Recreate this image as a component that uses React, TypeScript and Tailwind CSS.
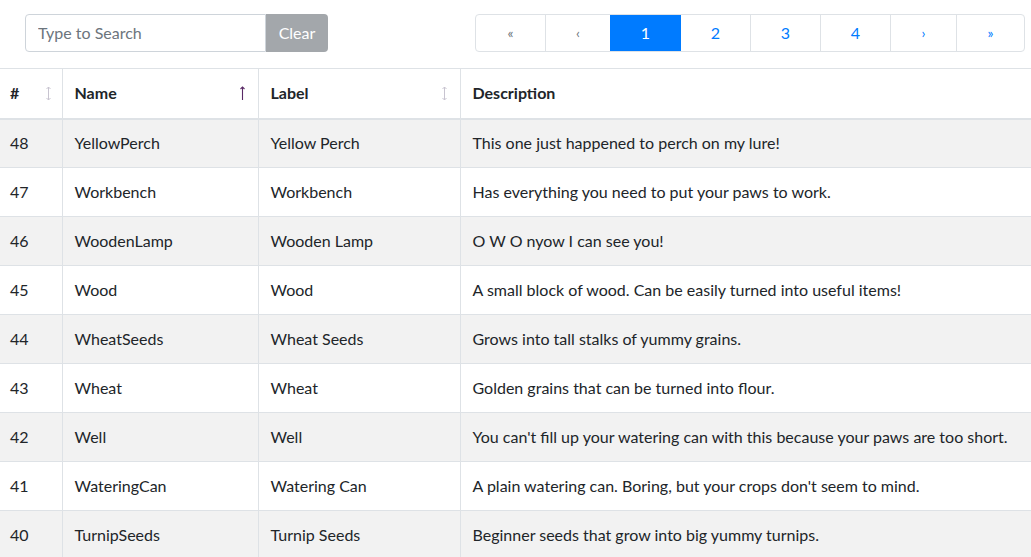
import { useState } from "react"

const items = [
  { id: 48, name: "YellowPerch", label: "Yellow Perch", description: "This one just happened to perch on my lure!" },
  { id: 47, name: "Workbench", label: "Workbench", description: "Has everything you need to put your paws to work." },
  { id: 46, name: "WoodenLamp", label: "Wooden Lamp", description: "O W O nyow I can see you!" },
  { id: 45, name: "Wood", label: "Wood", description: "A small block of wood. Can be easily turned into useful items!" },
  { id: 44, name: "WheatSeeds", label: "Wheat Seeds", description: "Grows into tall stalks of yummy grains." },
  { id: 43, name: "Wheat", label: "Wheat", description: "Golden grains that can be turned into flour." },
  { id: 42, name: "Well", label: "Well", description: "You can't fill up your watering can with this because your paws are too short." },
  { id: 41, name: "WateringCan", label: "Watering Can", description: "A plain watering can. Boring, but your crops don't seem to mind." },
  { id: 40, name: "TurnipSeeds", label: "Turnip Seeds", description: "Beginner seeds that grow into big yummy turnips." },
]

function SortBoth() {
  return (
    <svg width="7" height="15" viewBox="0 0 7 15" className="text-[#c8c4d0]">
      <path d="M3.5 1v13M1.5 3l2-2 2 2M1.5 12l2 2 2-2" stroke="currentColor" strokeWidth="1" fill="none" />
    </svg>
  )
}

function SortUp() {
  return (
    <svg width="7" height="15" viewBox="0 0 7 15" className="text-[#5a2a66]">
      <path d="M3.5 1v13M1.5 3l2-2 2 2" stroke="currentColor" strokeWidth="1.1" fill="none" />
    </svg>
  )
}

const pages = ["«", "‹", "1", "2", "3", "4", "›", "»"]
const widths = ["w-[69px]", "w-[65px]", "w-[71px]", "w-[69px]", "w-[70px]", "w-[70px]", "w-[66px]", "w-[68px]"]

export default function App() {
  const [query, setQuery] = useState("")

  return (
    <div className="min-h-screen bg-white font-['Lato','Noto_Sans',sans-serif] text-[#212529]">
      <div className="flex items-center justify-between pl-[25px] pr-[6px] pt-[14px] pb-[16px]">
        <div className="flex h-[38px]">
          <input
            value={query}
            onChange={(e) => setQuery(e.target.value)}
            placeholder="Type to Search"
            className="w-[241px] rounded-l-[4px] border border-[#ced4da] px-3 text-base text-[#495057] outline-none placeholder:text-[#6c757d]"
          />
          <button className="w-[62px] rounded-r-[4px] bg-[#a3a7ab] text-base text-white">Clear</button>
        </div>
        <div className="flex h-[38px] rounded-[4px] border border-[#dee2e6]">
          {pages.map((p, i) => (
            <div
              key={i}
              className={`${widths[i]} flex items-center justify-center text-base ${
                i > 0 && i !== 2 && i !== 3 ? "border-l border-[#dee2e6]" : ""
              } ${p === "1" ? "bg-[#007bff] text-white" : i < 2 ? "text-[#6c757d] text-sm" : i > 5 ? "text-[#007bff] text-sm" : "text-[#007bff]"}`}
            >
              {p}
            </div>
          ))}
        </div>
      </div>

      <table className="w-full border-collapse text-base">
        <thead>
          <tr className="border-t border-b-2 border-[#dee2e6]">
            <th className="h-[50px] w-[62px] border-r border-[#dee2e6] px-[10px] text-left font-bold">
              <div className="flex items-center justify-between">#<SortBoth /></div>
            </th>
            <th className="w-[196px] border-r border-[#dee2e6] px-3 text-left font-bold">
              <div className="flex items-center justify-between">Name<SortUp /></div>
            </th>
            <th className="w-[202px] border-r border-[#dee2e6] px-3 text-left font-bold">
              <div className="flex items-center justify-between">Label<SortBoth /></div>
            </th>
            <th className="px-3 text-left font-bold">Description</th>
          </tr>
        </thead>
        <tbody>
          {items.map((item, i) => (
            <tr key={item.id} className={`border-b border-[#dee2e6] ${i % 2 === 0 ? "bg-[#f2f2f2]" : "bg-white"}`}>
              <td className="h-[49px] border-r border-[#dee2e6] px-[10px]">{item.id}</td>
              <td className="border-r border-[#dee2e6] px-3">{item.name}</td>
              <td className="border-r border-[#dee2e6] px-3">{item.label}</td>
              <td className="px-3">{item.description}</td>
            </tr>
          ))}
        </tbody>
      </table>
    </div>
  )
}
